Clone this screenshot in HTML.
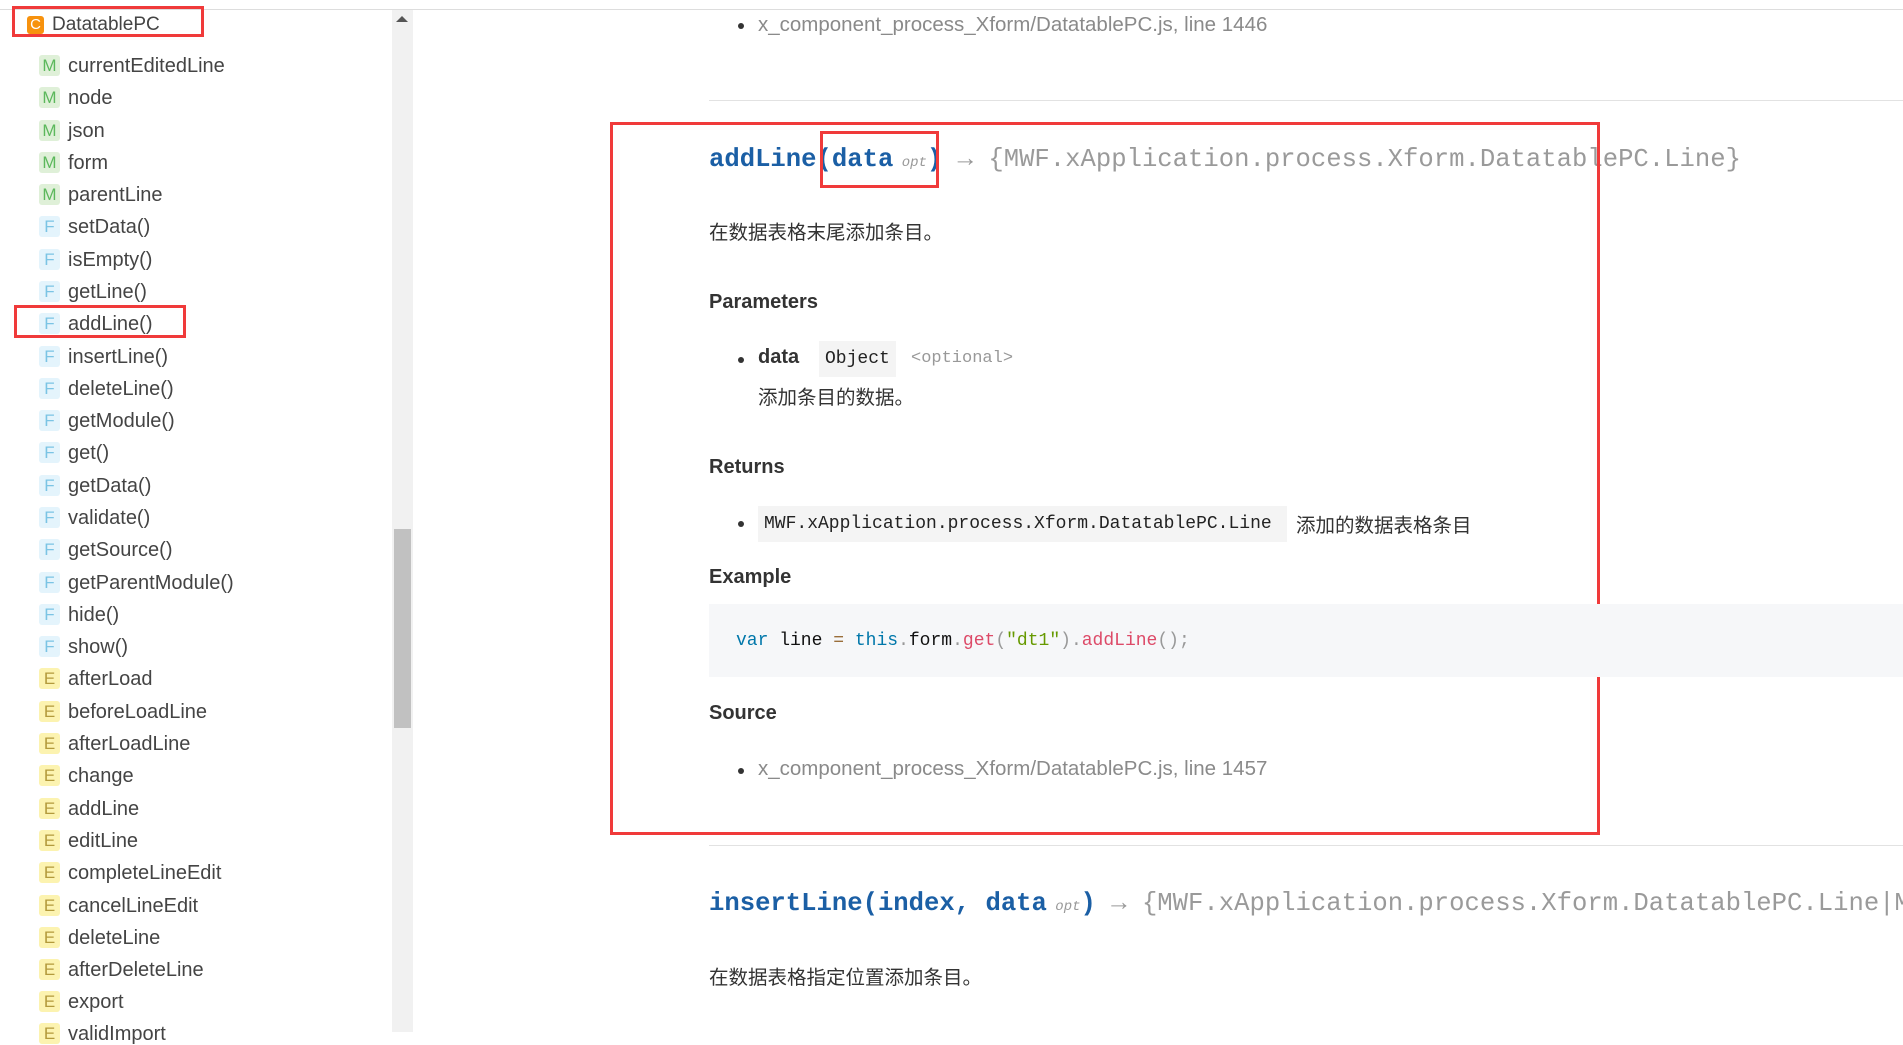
<!DOCTYPE html>
<html><head><meta charset="utf-8"><style>
*{margin:0;padding:0;box-sizing:border-box}
body{width:1903px;height:1032px;overflow:hidden;background:#fff;font-family:"Liberation Sans","Noto Sans CJK SC",sans-serif;color:#333;position:relative}
.a{position:absolute;white-space:nowrap}
.topline{position:absolute;left:0;top:9px;width:1903px;height:1px;background:#ddd}
.sb{position:absolute;left:392px;top:10px;width:21px;height:1022px;background:#f1f1f1}
.thumb{position:absolute;left:394px;top:529px;width:17px;height:199px;background:#c1c1c1}
.item{position:absolute;left:39px;height:22px;font-size:20px;line-height:22px;color:#444;margin-top:2px}
.b{display:inline-block;width:21px;height:21px;border-radius:3px;text-align:center;font-size:17px;line-height:21px;margin-right:8px;vertical-align:top}
.M{background:#dff0d8;color:#5cb85c}
.F{background:#e4f4fc;color:#7bc4e4}
.E{background:#fcf3b0;color:#b39a3c}
.red{position:absolute;border:3px solid #f03a3a}
.mono{font-family:"Liberation Mono","DejaVu Sans Mono",monospace}
.sig{font-size:25.6px;font-weight:bold;color:#1b5fa5}
.sig .g{color:#9a9a9a;font-weight:normal}
.sig .o{font-size:14px;color:#999;font-style:italic;font-weight:normal}
.h{font-size:20px;font-weight:bold;color:#333}
.t{font-size:19.5px;color:#333}
.bul{position:absolute;width:6px;height:6px;border-radius:50%;background:#333}
.code{background:#f4f4f4;padding:4px 6px;font-size:18px;color:#222}
.link{font-size:20.5px;color:#8a8a8a}
</style></head><body>
<div class="topline"></div>
<div class="sb"></div>
<div class="a" style="left:396px;top:16px;width:0;height:0;border-left:6px solid transparent;border-right:6px solid transparent;border-bottom:6px solid #555"></div>
<div class="thumb"></div>

<div class="a" style="left:27px;top:14px;height:21px;font-size:19px;line-height:21px;color:#444"><span class="b" style="background:#f7920e;color:#fff;width:17px;height:18px;line-height:18px;font-size:15px;margin-right:8px;margin-top:2px">C</span>DatatablePC</div>
<div class="red" style="left:12px;top:6px;width:192px;height:31px"></div>

<div class="item" style="top:53px"><span class="b M">M</span>currentEditedLine</div>
<div class="item" style="top:85px"><span class="b M">M</span>node</div>
<div class="item" style="top:118px"><span class="b M">M</span>json</div>
<div class="item" style="top:150px"><span class="b M">M</span>form</div>
<div class="item" style="top:182px"><span class="b M">M</span>parentLine</div>
<div class="item" style="top:214px"><span class="b F">F</span>setData()</div>
<div class="item" style="top:247px"><span class="b F">F</span>isEmpty()</div>
<div class="item" style="top:279px"><span class="b F">F</span>getLine()</div>
<div class="item" style="top:311px"><span class="b F">F</span>addLine()</div>
<div class="red" style="left:14px;top:305px;width:172px;height:33px"></div>
<div class="item" style="top:344px"><span class="b F">F</span>insertLine()</div>
<div class="item" style="top:376px"><span class="b F">F</span>deleteLine()</div>
<div class="item" style="top:408px"><span class="b F">F</span>getModule()</div>
<div class="item" style="top:440px"><span class="b F">F</span>get()</div>
<div class="item" style="top:473px"><span class="b F">F</span>getData()</div>
<div class="item" style="top:505px"><span class="b F">F</span>validate()</div>
<div class="item" style="top:537px"><span class="b F">F</span>getSource()</div>
<div class="item" style="top:570px"><span class="b F">F</span>getParentModule()</div>
<div class="item" style="top:602px"><span class="b F">F</span>hide()</div>
<div class="item" style="top:634px"><span class="b F">F</span>show()</div>
<div class="item" style="top:666px"><span class="b E">E</span>afterLoad</div>
<div class="item" style="top:699px"><span class="b E">E</span>beforeLoadLine</div>
<div class="item" style="top:731px"><span class="b E">E</span>afterLoadLine</div>
<div class="item" style="top:763px"><span class="b E">E</span>change</div>
<div class="item" style="top:796px"><span class="b E">E</span>addLine</div>
<div class="item" style="top:828px"><span class="b E">E</span>editLine</div>
<div class="item" style="top:860px"><span class="b E">E</span>completeLineEdit</div>
<div class="item" style="top:893px"><span class="b E">E</span>cancelLineEdit</div>
<div class="item" style="top:925px"><span class="b E">E</span>deleteLine</div>
<div class="item" style="top:957px"><span class="b E">E</span>afterDeleteLine</div>
<div class="item" style="top:989px"><span class="b E">E</span>export</div>
<div class="item" style="top:1021px"><span class="b E">E</span>validImport</div>

<!-- main -->
<div class="bul" style="left:738px;top:23px"></div>
<div class="a link" style="left:758px;top:13px">x_component_process_Xform/DatatablePC.js, line 1446</div>
<div class="a" style="left:709px;top:100px;width:1194px;height:1px;background:#e2e2e2"></div>

<div class="a mono sig" style="left:709px;top:145px">addLine(data<span class="o"> opt</span>) <span class="g">→ {MWF.xApplication.process.Xform.DatatablePC.Line}</span></div>
<div class="red" style="left:610px;top:122px;width:990px;height:713px"></div>
<div class="red" style="left:820px;top:131px;width:119px;height:57px"></div>

<div class="a t" style="left:709px;top:216px">在数据表格末尾添加条目。</div>
<div class="a h" style="left:709px;top:291px">Parameters</div>
<div class="bul" style="left:738px;top:357px"></div>
<div class="a" style="left:758px;top:346px;font-size:20px;font-weight:bold">data</div>
<div class="a mono code" style="left:819px;top:341px;height:36px;line-height:28px">Object</div>
<div class="a mono" style="left:911px;top:349px;font-size:17px;color:#999">&lt;optional&gt;</div>
<div class="a t" style="left:758px;top:381px">添加条目的数据。</div>
<div class="a h" style="left:709px;top:456px">Returns</div>
<div class="bul" style="left:738px;top:521px"></div>
<div class="a mono code" style="left:758px;top:506px;height:36px;line-height:28px;width:529px">MWF.xApplication.process.Xform.DatatablePC.Line</div>
<div class="a t" style="left:1296px;top:509px">添加的数据表格条目</div>
<div class="a h" style="left:709px;top:566px">Example</div>
<div class="a" style="left:709px;top:604px;width:1194px;height:73px;background:#f6f7f9"></div>
<div class="a mono" style="left:736px;top:631px;font-size:18px;color:#111"><span style="color:#07a">var</span> line <span style="color:#9a6e3a">=</span> <span style="color:#07a">this</span><span style="color:#999">.</span>form<span style="color:#999">.</span><span style="color:#dd4a68">get</span><span style="color:#999">(</span><span style="color:#690">"dt1"</span><span style="color:#999">).</span><span style="color:#dd4a68">addLine</span><span style="color:#999">();</span></div>
<div class="a h" style="left:709px;top:702px">Source</div>
<div class="bul" style="left:738px;top:768px"></div>
<div class="a link" style="left:758px;top:757px">x_component_process_Xform/DatatablePC.js, line 1457</div>
<div class="a" style="left:709px;top:845px;width:1194px;height:1px;background:#e2e2e2"></div>
<div class="a mono sig" style="left:709px;top:889px">insertLine(index, data<span class="o"> opt</span>) <span class="g">→ {MWF.xApplication.process.Xform.DatatablePC.Line|MWF}</span></div>
<div class="a t" style="left:709px;top:961px">在数据表格指定位置添加条目。</div>
</body></html>
